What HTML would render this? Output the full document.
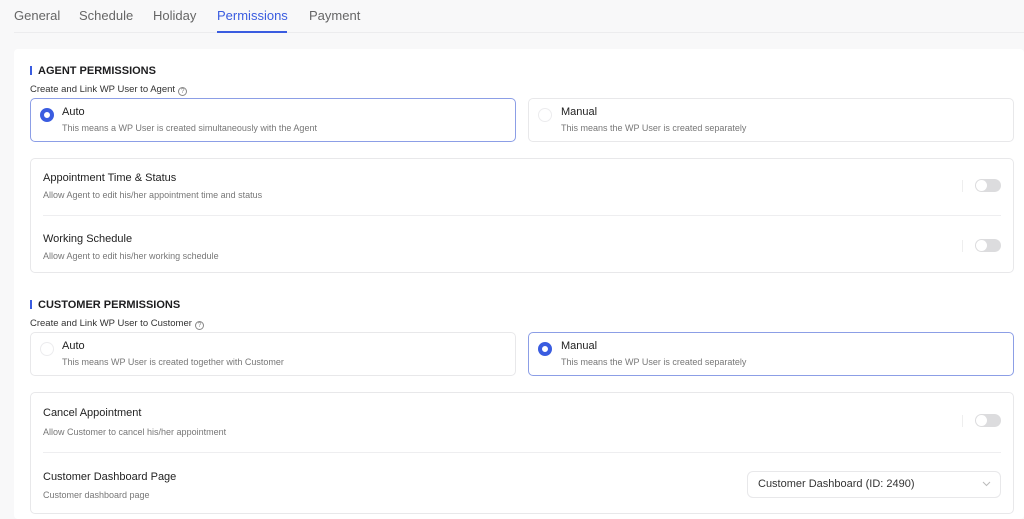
<!DOCTYPE html>
<html><head><style>
*{margin:0;padding:0;box-sizing:border-box}
body{width:1024px;height:515px;overflow:hidden;background:#f8f8f9;font-family:"Liberation Sans",sans-serif;position:relative;color:#222}
.a{position:absolute;white-space:nowrap}
.tab{font-size:13px;color:#666;top:8px}
.card{position:absolute;left:14px;top:49px;width:1010px;height:470px;background:#fff;border-radius:4px}
.h{font-size:11px;font-weight:bold;color:#1d1d1f}
.bar{position:absolute;width:2px;height:9px;background:#3a5ce0}
.lbl{font-size:9.5px;color:#333}
.q{display:inline-block;width:9px;height:9px;border:1px solid #888;border-radius:50%;font-size:7px;text-align:center;line-height:8px;color:#888;vertical-align:-1px;margin-left:3px}
.box{position:absolute;border:1px solid #e8e8ea;border-radius:5px;background:#fff}
.sel{border-color:#8c9ee6}
.rt{font-size:11px;color:#222}
.rd{font-size:9px;color:#777}
.radio{position:absolute;width:14px;height:14px;border-radius:50%;border:1px solid #ececee}
.radio.on{border:4px solid #3a5ce0;background:#fff}
.tg{position:absolute;width:26px;height:13px;border-radius:7px;background:#dcdcde}
.tg:after{content:"";position:absolute;left:1px;top:1px;width:11px;height:11px;border-radius:50%;background:#fff}
.vd{position:absolute;width:1px;height:12px;background:#eee}
.hr{position:absolute;height:1px;background:#eeeef0}
</style></head><body>
<div class="a tab" style="left:14px">General</div>
<div class="a tab" style="left:79px">Schedule</div>
<div class="a tab" style="left:153px">Holiday</div>
<div class="a tab" style="left:217px;color:#3a5ce0">Permissions</div>
<div class="a tab" style="left:309px">Payment</div>
<div class="a" style="left:14px;top:32px;width:1010px;height:1px;background:#ececee"></div>
<div class="a" style="left:217px;top:31px;width:70px;height:2px;background:#3a5ce0"></div>
<div class="card"></div>

<div class="bar" style="left:30px;top:66px"></div>
<div class="a h" style="left:38px;top:65px">AGENT PERMISSIONS</div>
<div class="a lbl" style="left:30px;top:84px">Create and Link WP User to Agent<span class="q">?</span></div>
<div class="box sel" style="left:30px;top:98px;width:486px;height:44px"></div>
<div class="radio on" style="left:40px;top:108px"></div>
<div class="a rt" style="left:62px;top:106px">Auto</div>
<div class="a rd" style="left:62px;top:123px">This means a WP User is created simultaneously with the Agent</div>
<div class="box" style="left:528px;top:98px;width:486px;height:44px"></div>
<div class="radio" style="left:538px;top:108px"></div>
<div class="a rt" style="left:561px;top:106px">Manual</div>
<div class="a rd" style="left:561px;top:123px">This means the WP User is created separately</div>

<div class="box" style="left:30px;top:158px;width:984px;height:115px"></div>
<div class="a rt" style="left:43px;top:172px">Appointment Time &amp; Status</div>
<div class="a rd" style="left:43px;top:190px">Allow Agent to edit his/her appointment time and status</div>
<div class="vd" style="left:962px;top:180px"></div><div class="tg" style="left:975px;top:179px"></div>
<div class="hr" style="left:43px;top:215px;width:958px"></div>
<div class="a rt" style="left:43px;top:233px">Working Schedule</div>
<div class="a rd" style="left:43px;top:251px">Allow Agent to edit his/her working schedule</div>
<div class="vd" style="left:962px;top:240px"></div><div class="tg" style="left:975px;top:239px"></div>

<div class="bar" style="left:30px;top:300px"></div>
<div class="a h" style="left:38px;top:299px">CUSTOMER PERMISSIONS</div>
<div class="a lbl" style="left:30px;top:318px">Create and Link WP User to Customer<span class="q">?</span></div>
<div class="box" style="left:30px;top:332px;width:486px;height:44px"></div>
<div class="radio" style="left:40px;top:342px"></div>
<div class="a rt" style="left:62px;top:340px">Auto</div>
<div class="a rd" style="left:62px;top:357px">This means WP User is created together with Customer</div>
<div class="box sel" style="left:528px;top:332px;width:486px;height:44px"></div>
<div class="radio on" style="left:538px;top:342px"></div>
<div class="a rt" style="left:561px;top:340px">Manual</div>
<div class="a rd" style="left:561px;top:357px">This means the WP User is created separately</div>

<div class="box" style="left:30px;top:392px;width:984px;height:122px"></div>
<div class="a rt" style="left:43px;top:407px">Cancel Appointment</div>
<div class="a rd" style="left:43px;top:427px">Allow Customer to cancel his/her appointment</div>
<div class="vd" style="left:962px;top:415px"></div><div class="tg" style="left:975px;top:414px"></div>
<div class="hr" style="left:43px;top:452px;width:958px"></div>
<div class="a rt" style="left:43px;top:471px">Customer Dashboard Page</div>
<div class="a rd" style="left:43px;top:490px">Customer dashboard page</div>
<div class="box" style="left:747px;top:471px;width:254px;height:27px;border-radius:6px"></div>
<div class="a" style="left:758px;top:478px;font-size:11px;color:#333">Customer Dashboard (ID: 2490)</div>
<svg class="a" style="left:982px;top:481px" width="9" height="6" viewBox="0 0 9 6"><path d="M1 1l3.5 3.5L8 1" fill="none" stroke="#bbb" stroke-width="1"/></svg>
</body></html>
